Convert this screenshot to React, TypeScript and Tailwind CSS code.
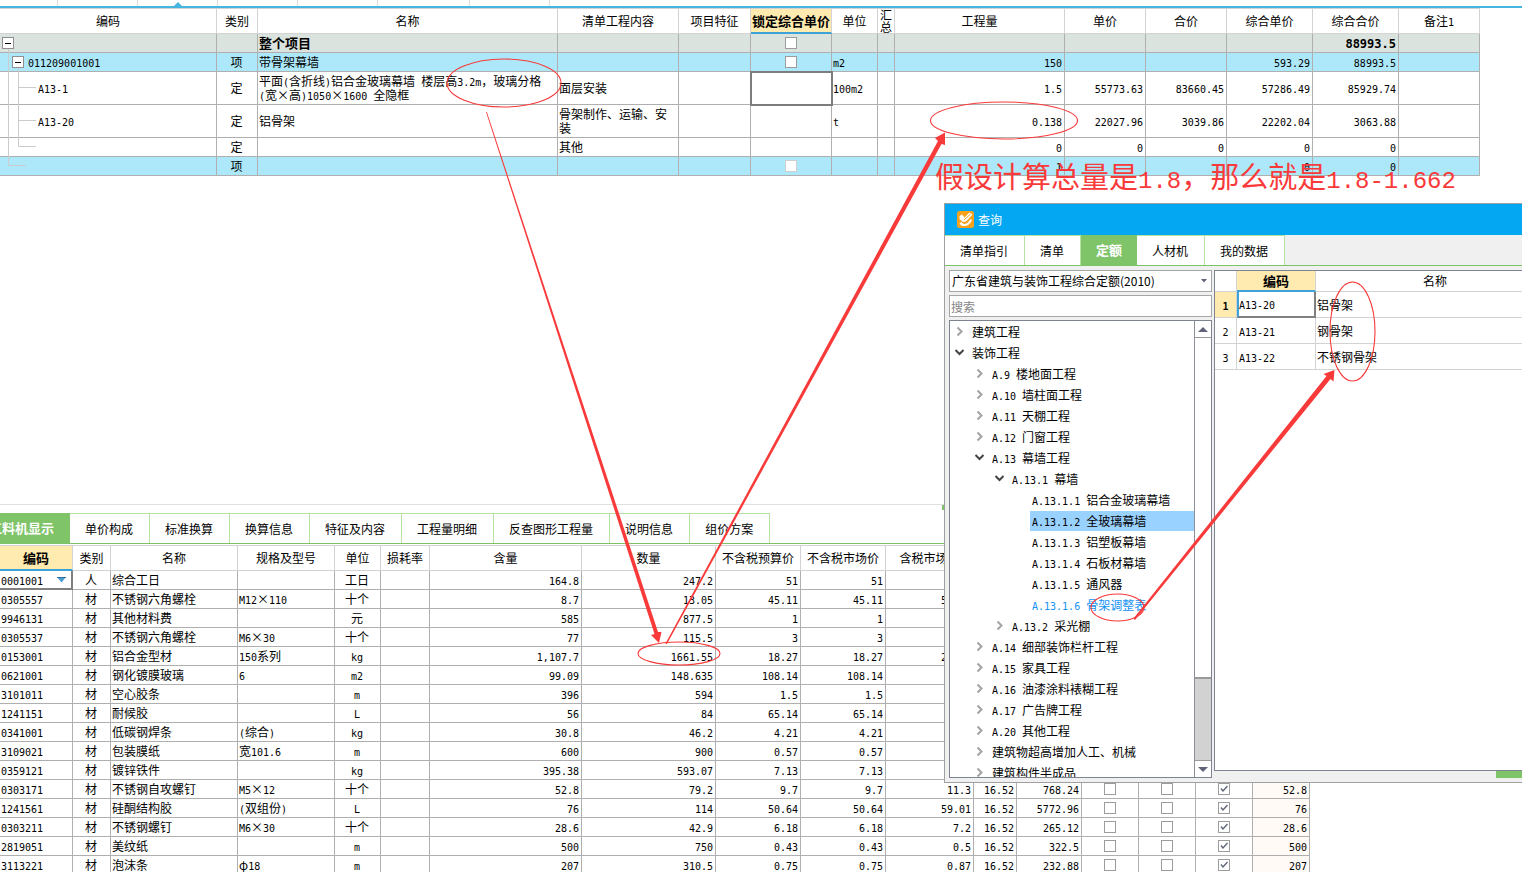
import type { ReactNode } from "react";
import { clsx } from "clsx";

const budgetColumns = [
  { title: "编码", width: "w-[217px]" },
  { title: "类别", width: "w-[41px]" },
  { title: "名称", width: "" },
  { title: "清单工程内容", width: "w-[121px]" },
  { title: "项目特征", width: "w-[72px]" },
  { title: "锁定综合单价", width: "w-[81px]" },
  { title: "单位", width: "w-[46px]" },
  { title: "汇总", width: "w-[17px]" },
  { title: "工程量", width: "w-[170px]" },
  { title: "单价", width: "w-[81px]" },
  { title: "合价", width: "w-[81px]" },
  { title: "综合单价", width: "w-[86px]" },
  { title: "综合合价", width: "w-[86px]" },
  { title: "备注1", width: "w-[81px]" },
];

type BudgetRow = {
  level: number;
  open?: boolean;
  code?: string;
  type?: string;
  name?: string;
  content?: string;
  lock?: "box" | "faint" | "cursor";
  unit?: string;
  values: string[];
  height: string;
  tone: string;
};

const budgetRows: BudgetRow[] = [
  { level: 0, open: true, name: "整个项目", lock: "box", values: ["", "", "", "", "88993.5"], height: "h-[19px]", tone: "bg-[#dae3de] font-bold" },
  { level: 1, open: true, code: "011209001001", type: "项", name: "带骨架幕墙", lock: "box", unit: "m2", values: ["150", "", "", "593.29", "88993.5"], height: "h-[19px]", tone: "bg-[#ade8fa]" },
  { level: 2, code: "A13-1", type: "定", name: "平面(含折线)铝合金玻璃幕墙 楼层高3.2m，玻璃分格\n(宽×高)1050×1600 全隐框", content: "面层安装", lock: "cursor", unit: "100m2", values: ["1.5", "55773.63", "83660.45", "57286.49", "85929.74"], height: "h-[33px]", tone: "bg-white" },
  { level: 2, code: "A13-20", type: "定", name: "铝骨架", content: "骨架制作、运输、安\n装", unit: "t", values: ["0.138", "22027.96", "3039.86", "22202.04", "3063.88"], height: "h-[33px]", tone: "bg-white" },
  { level: 2, type: "定", content: "其他", values: ["0", "0", "0", "0", "0"], height: "h-[19px]", tone: "bg-white" },
  { level: 1, type: "项", lock: "faint", values: ["1", "", "", "0", "0"], height: "h-[19px]", tone: "bg-[#ade8fa]" },
];

const codeIndent = ["pl-px", "pl-[11px]", "pl-[37px]"];

const detailTabs = ["单价构成", "标准换算", "换算信息", "特征及内容", "工程量明细", "反查图形工程量", "说明信息", "组价方案"];

const detailColumns = [
  { title: "编码", width: "w-[73px]" },
  { title: "类别", width: "w-[38px]" },
  { title: "名称", width: "w-[127px]" },
  { title: "规格及型号", width: "w-[97px]" },
  { title: "单位", width: "w-[46px]" },
  { title: "损耗率", width: "w-[49px]" },
  { title: "含量", width: "w-[152px]" },
  { title: "数量", width: "" },
  { title: "不含税预算价", width: "w-[85px]" },
  { title: "不含税市场价", width: "w-[85px]" },
  { title: "含税市场价", width: "w-[88px]" },
  { title: "", width: "w-[43px]" },
  { title: "", width: "w-[65px]" },
  { title: "", width: "w-[57px]" },
  { title: "", width: "w-[57px]" },
  { title: "", width: "w-[57px]" },
  { title: "", width: "w-[57px]" },
];

// code, type, name, spec, unit, content, amount, budget price, market price, taxed price, rate, total, last
const detailRows = [
  ["0001001", "人", "综合工日", "", "工日", "164.8", "247.2", "51", "51"],
  ["0305557", "材", "不锈钢六角螺栓", "M12×110", "十个", "8.7", "13.05", "45.11", "45.11", "52.56"],
  ["9946131", "材", "其他材料费", "", "元", "585", "877.5", "1", "1"],
  ["0305537", "材", "不锈钢六角螺栓", "M6×30", "十个", "77", "115.5", "3", "3"],
  ["0153001", "材", "铝合金型材", "150系列", "kg", "1,107.7", "1661.55", "18.27", "18.27", "21.29"],
  ["0621001", "材", "钢化镀膜玻璃", "6", "m2", "99.09", "148.635", "108.14", "108.14"],
  ["3101011", "材", "空心胶条", "", "m", "396", "594", "1.5", "1.5"],
  ["1241151", "材", "耐候胶", "", "L", "56", "84", "65.14", "65.14"],
  ["0341001", "材", "低碳钢焊条", "(综合)", "kg", "30.8", "46.2", "4.21", "4.21"],
  ["3109021", "材", "包装膜纸", "宽101.6", "m", "600", "900", "0.57", "0.57"],
  ["0359121", "材", "镀锌铁件", "", "kg", "395.38", "593.07", "7.13", "7.13"],
  ["0303171", "材", "不锈钢自攻螺钉", "M5×12", "十个", "52.8", "79.2", "9.7", "9.7", "11.3", "16.52", "768.24", "52.8"],
  ["1241561", "材", "硅酮结构胶", "(双组份)", "L", "76", "114", "50.64", "50.64", "59.01", "16.52", "5772.96", "76"],
  ["0303211", "材", "不锈钢螺钉", "M6×30", "十个", "28.6", "42.9", "6.18", "6.18", "7.2", "16.52", "265.12", "28.6"],
  ["2819051", "材", "美纹纸", "", "m", "500", "750", "0.43", "0.43", "0.5", "16.52", "322.5", "500"],
  ["3113221", "材", "泡沫条", "φ18", "m", "207", "310.5", "0.75", "0.75", "0.87", "16.52", "232.88", "207"],
];

const treeItems: { text: string; level: number; state?: "open" | "closed"; look?: "selected" | "link" }[] = [
  { text: "建筑工程", level: 0, state: "closed" },
  { text: "装饰工程", level: 0, state: "open" },
  { text: "A.9 楼地面工程", level: 1, state: "closed" },
  { text: "A.10 墙柱面工程", level: 1, state: "closed" },
  { text: "A.11 天棚工程", level: 1, state: "closed" },
  { text: "A.12 门窗工程", level: 1, state: "closed" },
  { text: "A.13 幕墙工程", level: 1, state: "open" },
  { text: "A.13.1 幕墙", level: 2, state: "open" },
  { text: "A.13.1.1 铝合金玻璃幕墙", level: 3 },
  { text: "A.13.1.2 全玻璃幕墙", level: 3, look: "selected" },
  { text: "A.13.1.3 铝塑板幕墙", level: 3 },
  { text: "A.13.1.4 石板材幕墙", level: 3 },
  { text: "A.13.1.5 通风器", level: 3 },
  { text: "A.13.1.6 骨架调整表", level: 3, look: "link" },
  { text: "A.13.2 采光棚", level: 2, state: "closed" },
  { text: "A.14 细部装饰栏杆工程", level: 1, state: "closed" },
  { text: "A.15 家具工程", level: 1, state: "closed" },
  { text: "A.16 油漆涂料裱糊工程", level: 1, state: "closed" },
  { text: "A.17 广告牌工程", level: 1, state: "closed" },
  { text: "A.20 其他工程", level: 1, state: "closed" },
  { text: "建筑物超高增加人工、机械", level: 1, state: "closed" },
  { text: "建筑构件半成品", level: 1, state: "closed" },
];

const treeIndent = ["pl-1", "pl-6", "pl-11", "pl-16"];

// Latin runs are set in a half-width monospace so that they line up with the Chinese characters
function Text({ children, bold }: { children?: string; bold?: boolean }) {
  if (!children) return null;
  return (
    <>
      {children.split(/([\x20-\x7e]+)/).map((part, i) =>
        i % 2 ? (
          <span
            key={i}
            className={clsx("font-['DejaVu_Sans_Mono',monospace] whitespace-pre", bold ? "text-[12px]/[10px]" : "text-[10px]/[10px]")}
          >
            {part}
          </span>
        ) : (
          part
        ),
      )}
    </>
  );
}

function Tick({ label, checked, faint }: { label: string; checked?: boolean; faint?: boolean }) {
  return (
    <span className="mx-auto grid size-3">
      <input
        type="checkbox"
        aria-label={label}
        defaultChecked={checked}
        className={clsx("col-start-1 row-start-1 size-3 appearance-none border bg-white", faint ? "border-[#cfcfcf]" : "border-[#9c9c9c]")}
      />
      {checked && (
        <svg className="pointer-events-none col-start-1 row-start-1 size-3" viewBox="0 0 12 12" fill="none">
          <path d="M3 5.5 L5 8 L9.5 3" stroke="#5f6579" strokeWidth="1.4" />
        </svg>
      )}
    </span>
  );
}

function Toggle() {
  return (
    <button type="button" aria-label="-" className="grid size-3 shrink-0 place-items-center border border-[#8f8f8f] bg-white">
      <span className="h-px w-[6px] bg-black" />
    </button>
  );
}

function Cell({ children, className }: { children?: ReactNode; className?: string }) {
  return <td className={clsx("border-r border-b border-[#afafaf] py-0 pr-0.5 pl-px", className)}>{children}</td>;
}

function BudgetTable() {
  return (
    <div className="relative pr-[42px]">
      <table className="w-full table-fixed border-separate border-spacing-0 border-t border-[#d3d3d3]">
        <colgroup>
          {budgetColumns.map((c) => (
            <col key={c.title} className={c.width} />
          ))}
        </colgroup>
        <thead>
          <tr>
            {budgetColumns.map((c) => (
              <th
                key={c.title}
                className={clsx(
                  "h-[25px] border-r border-[#d3d3d3] p-0",
                  c.title === "锁定综合单价"
                    ? "border-b-2 border-b-[#3fa2d6] bg-[#ffebb0] text-[13px] font-bold whitespace-nowrap"
                    : "border-b font-normal",
                )}
              >
                {c.title === "汇总" ? (
                  <div className="mx-auto h-6 w-3 leading-3 break-all">{c.title}</div>
                ) : (
                  <Text>{c.title}</Text>
                )}
              </th>
            ))}
          </tr>
        </thead>
        <tbody>
          {budgetRows.map((row, i) => (
            <tr key={i} className={clsx(row.tone, row.height)}>
              <Cell>
                <div className={clsx("flex items-center gap-1", codeIndent[row.level])}>
                  {row.open && <Toggle />}
                  <span>
                    <Text>{row.code}</Text>
                  </span>
                </div>
              </Cell>
              <Cell className="text-center">{row.type}</Cell>
              <Cell className={clsx("leading-[14px] whitespace-pre-line", i === 0 && "text-[13px]")}>
                <Text>{row.name}</Text>
              </Cell>
              <Cell className="leading-[14px] whitespace-pre-line">{row.content}</Cell>
              <Cell />
              <Cell className={clsx(row.lock === "cursor" && "outline-2 -outline-offset-1 outline-[#7d7d7d]")}>
                {(row.lock === "box" || row.lock === "faint") && <Tick label="锁定综合单价" faint={row.lock === "faint"} />}
              </Cell>
              <Cell>
                <Text>{row.unit}</Text>
              </Cell>
              <Cell />
              {row.values.map((value, n) => (
                <Cell key={n} className="text-right">
                  <Text bold={i === 0}>{value}</Text>
                </Cell>
              ))}
              <Cell />
            </tr>
          ))}
        </tbody>
      </table>
      {/* Tree branches of the code column */}
      <svg className="pointer-events-none absolute top-0 left-0" width="40" height="168" fill="none" stroke="#cbcbcb">
        <path d="M8.5 41V157.5H26M18.5 60V138.5H36M18.5 79.5H36M18.5 112.5H36" />
        <path d="M12.500 48.500H23.500V59.500H12.500Z" fill="white" stroke="#8f8f8f" />
        <path d="M15 54.500H21" stroke="black" />
      </svg>
    </div>
  );
}

function DetailPanel() {
  return (
    <section className="overflow-hidden border-t border-[#e0e0e0]">
      <div className="h-2 pl-[942px]">
        <div className="h-[5px] w-[26px] bg-[#7fc469]" />
      </div>
      <div className="flex border-b border-[#7cc267]">
        <button type="button" className="-ml-[27px] h-[30px] bg-[#7fc469] px-4 text-[13px] font-bold whitespace-nowrap text-white">
          工料机显示
        </button>
        {detailTabs.map((tab) => (
          <button key={tab} type="button" className="h-[30px] border-t border-r border-[#b4e3a1] pt-px pr-4 pl-[15px] whitespace-nowrap">
            {tab}
          </button>
        ))}
      </div>
      <div className="pt-px pr-[212px]">
        <table className="w-full table-fixed border-separate border-spacing-0 border-t border-[#d3d3d3]">
          <colgroup>
            {detailColumns.map((c, i) => (
              <col key={i} className={c.width} />
            ))}
          </colgroup>
          <thead>
            <tr>
              {detailColumns.map((c, i) => (
                <th
                  key={i}
                  className={clsx(
                    "h-[25px] border-r border-[#d3d3d3] p-0 whitespace-nowrap",
                    i === 0 ? "border-b-2 border-b-[#3fa2d6] bg-[#ffebb0] text-[13px] font-bold" : "border-b font-normal",
                  )}
                >
                  {c.title}
                </th>
              ))}
            </tr>
          </thead>
          <tbody>
            {detailRows.map(([code, type, name, spec, unit, ...values], i) => (
              <tr key={code} className="h-[19px]">
                {i === 0 ? (
                  <td className="border-r-2 border-b-2 border-[#808080] px-px py-0">
                    <div className="flex items-center justify-between pr-1">
                      <span>
                        <Text>{code}</Text>
                      </span>
                      <button type="button" aria-label={code}>
                        <svg width="9" height="6" viewBox="0 0 9 6">
                          <path d="M0 0H9L4.5 5.5Z" fill="#4b9cd0" />
                          <path d="M0 0H9V1H0Z" fill="#2e6f9e" />
                        </svg>
                      </button>
                    </div>
                  </td>
                ) : (
                  <Cell>
                    <Text>{code}</Text>
                  </Cell>
                )}
                <Cell className="text-center">{type}</Cell>
                <Cell className="whitespace-nowrap">{name}</Cell>
                <Cell>
                  <Text>{spec}</Text>
                </Cell>
                <Cell className="text-center">
                  <Text>{unit}</Text>
                </Cell>
                <Cell />
                {[0, 1, 2, 3, 4, 5, 6].map((n) => (
                  <Cell key={n} className="text-right">
                    <Text>{values[n]}</Text>
                  </Cell>
                ))}
                <Cell>
                  <Tick label={`${name} 1`} />
                </Cell>
                <Cell>
                  <Tick label={`${name} 2`} />
                </Cell>
                <Cell>
                  <Tick label={`${name} 3`} checked />
                </Cell>
                <Cell className="bg-[#fffaf6] text-right">
                  <Text>{values[7]}</Text>
                </Cell>
              </tr>
            ))}
          </tbody>
        </table>
      </div>
    </section>
  );
}

function Chevron({ open }: { open: boolean }) {
  return (
    <svg className="shrink-0" width="11" height="11" viewBox="0 0 11 11" fill="none" strokeWidth="2">
      {open ? <path d="M1.5 3 L5.5 7 L9.5 3" stroke="#444444" /> : <path d="M3.5 1.5 L7.5 5.5 L3.5 9.5" stroke="#a3a3a3" />}
    </svg>
  );
}

function QuotaTree() {
  return (
    <div className="flex h-[458px] border border-[#7d8390] bg-white">
      <ul className="min-w-0 flex-1 overflow-hidden">
        {treeItems.map((item) => (
          <li key={item.text} className={clsx("flex h-[21px] items-center", treeIndent[item.level])}>
            <span className="flex w-4 shrink-0">{item.state && <Chevron open={item.state === "open"} />}</span>
            <span
              className={clsx(
                "flex-1 pl-0.5 leading-5 whitespace-nowrap",
                item.look === "selected" && "bg-[#99d1ff]",
                item.look === "link" && "text-[#1492f5]",
              )}
            >
              <Text>{item.text}</Text>
            </span>
          </li>
        ))}
      </ul>
      <div className="flex w-[17px] flex-col border-l border-[#8b8f98] bg-[#d2d2d2]">
        <button type="button" aria-label="▲" className="grid h-[17px] place-items-center border-b border-[#9a9a9a] bg-white">
          <svg width="10" height="5">
            <path d="M0 5L5 0L10 5Z" fill="#606478" />
          </svg>
        </button>
        <div className="h-[341px] border-b-2 border-[#9a9a9a] bg-white" />
        <div className="flex-1" />
        <button type="button" aria-label="▼" className="grid h-[17px] place-items-center border-t border-[#9a9a9a] bg-white">
          <svg width="10" height="5">
            <path d="M0 0L5 5L10 0Z" fill="#606478" />
          </svg>
        </button>
      </div>
    </div>
  );
}

const quotas = [
  { code: "A13-20", name: "铝骨架" },
  { code: "A13-21", name: "钢骨架" },
  { code: "A13-22", name: "不锈钢骨架" },
];

function QueryWindow() {
  const tab = "h-[30px] border-t border-r border-[#b4e3a1] bg-white pt-px pl-[15px] pr-4";
  return (
    <section className="absolute top-[203px] right-0 left-[944px] border-t border-b border-l border-[#a0a0a0] bg-[#f0f0f0]">
      <header className="flex h-[31px] items-center gap-1 bg-[#03a7f2] pl-3 text-white">
        <svg width="17" height="17" viewBox="0 0 17 17" fill="none">
          <rect width="17" height="17" rx="2.5" fill="#f9a11b" />
          <path d="M2.500 5L5 3.500L7.500 6.500L12.500 1.500L15.500 3.500L9 10.500L6 11L2.500 8Z" fill="white" />
          <path d="M3.500 11.500C5 15 11.500 15.500 14 8.500" stroke="white" strokeWidth="2.200" />
          <path d="M7 9L13.500 3" stroke="#f9a11b" />
        </svg>
        <h2>查询</h2>
      </header>
      <nav className="flex border-b border-[#7cc267]">
        <button type="button" className={tab}>清单指引</button>
        <button type="button" className={tab}>清单</button>
        <button type="button" className="h-[30px] bg-[#7fc469] px-[15px] text-[13px] font-bold text-white">定额</button>
        <button type="button" className={tab}>人材机</button>
        <button type="button" className={tab}>我的数据</button>
      </nav>
      <div className="flex gap-0.5 pt-1 pb-1 pl-1">
        <div className="flex w-[263px] shrink-0 flex-col gap-[3px]">
          <div className="grid">
            <select
              aria-label="定额"
              className="col-start-1 row-start-1 h-[22px] w-full appearance-none border border-[#a6a6a6] bg-white pl-0.5"
            >
              <option>广东省建筑与装饰工程综合定额(2010)</option>
            </select>
            <svg className="pointer-events-none col-start-1 row-start-1 mr-[5px] self-center justify-self-end" width="6" height="4">
              <path d="M0 0H6L3 3.5Z" fill="#606478" />
            </svg>
          </div>
          <input
            type="text"
            aria-label="搜索"
            placeholder="搜索"
            className="h-[22px] border border-[#a6a6a6] bg-white px-px placeholder:text-[#858585]"
          />
          <QuotaTree />
        </div>
        <div className="min-w-0 flex-1">
          <div className="h-[501px] border-t border-b border-l border-[#7d8390] bg-white">
            <table className="w-full table-fixed border-separate border-spacing-0">
              <colgroup>
                <col className="w-[22px]" />
                <col className="w-[79px]" />
                <col />
              </colgroup>
              <thead>
                <tr>
                  <th className="h-[21px] border-r border-b border-[#d3d3d3] p-0" />
                  <th className="border-r border-b-2 border-r-[#d3d3d3] border-b-[#3fa2d6] bg-[#ffebb0] p-0 text-[13px]">编码</th>
                  <th className="border-b border-[#d3d3d3] p-0 pl-8 font-normal">名称</th>
                </tr>
              </thead>
              <tbody>
                {quotas.map((quota, i) => (
                  <tr key={quota.code} className="h-[26px]">
                    <td className={clsx("border-r border-b border-[#d3d3d3] p-0 text-center", i === 0 && "bg-[#ffebb0] font-bold")}>
                      <Text>{String(i + 1)}</Text>
                    </td>
                    <td
                      className={clsx(
                        "py-0",
                        i === 0
                          ? "border-r-2 border-b-2 border-l-2 border-r-[#808080] border-b-[#808080] border-l-[#3fa2d6] pl-0"
                          : "border-r border-b border-[#d3d3d3] pl-0.5",
                      )}
                    >
                      <Text>{quota.code}</Text>
                    </td>
                    <td className="border-b border-[#d3d3d3] px-px py-0">{quota.name}</td>
                  </tr>
                ))}
              </tbody>
            </table>
          </div>
          <div className="ml-auto h-[7px] w-[26px] bg-[#7fc469]" />
        </div>
      </div>
    </section>
  );
}

function Annotations() {
  return (
    <>
      <svg className="pointer-events-none absolute inset-0 h-full w-full" fill="none" stroke="#f93a3a" strokeWidth="1.1">
        <ellipse cx="504" cy="83" rx="57" ry="24" />
        <ellipse cx="1004" cy="120.500" rx="73.500" ry="18.500" />
        <ellipse cx="679" cy="653.500" rx="41" ry="11.500" />
        <ellipse cx="1352.500" cy="331.500" rx="22.500" ry="49.500" />
        <ellipse cx="1117.500" cy="607.500" rx="26.500" ry="13.500" />
        <g fill="#f93a3a" stroke="none">
          <path d="M486 112L486.800 111.800L658 632L661.500 632L659 643L651 635L654.500 634Z" />
          <path d="M665.500 643.500L666.800 644.200L941.500 144L945 145L945 132.500L935 138L938 141Z" />
          <path d="M1133.500 618.500L1135 620L1330.500 379L1333.500 381.500L1334.500 370L1323.500 374L1326.500 376Z" />
        </g>
      </svg>
      <p className="pointer-events-none absolute top-[157px] left-[935px] text-[29px] leading-9 font-normal whitespace-nowrap text-[#f93a3a]">
        假设计算总量是
        <span className="font-['Liberation_Mono',monospace] text-[24px]">1.8</span>
        ，那么就是
        <span className="font-['Liberation_Mono',monospace] text-[24px]">1.8-1.662</span>
      </p>
    </>
  );
}

export default function App() {
  return (
    <main className="relative flex h-screen flex-col overflow-hidden bg-white font-['Noto_Sans_CJK_SC',sans-serif] text-[12px] leading-4 text-black">
      <div className="h-[504px] shrink-0">
        {/* Lower edge of the tab strip, the marker points at the open tab */}
        <div className="flex h-2 border-b-2 border-[#45b4df]">
          <div className="w-[58px] border-r border-[#dddddd]" />
          <div className="w-[80px] border-r border-[#dddddd]" />
          <div className="flex w-[80px] items-end justify-center border-r border-[#dddddd]">
            <svg width="8" height="4">
              <path d="M0 4L4 0L8 4Z" fill="#45b4df" />
            </svg>
          </div>
          <div className="w-[80px] border-r border-[#dddddd]" />
          <div className="w-[80px] border-r border-[#dddddd]" />
          <div className="w-[92px] border-r border-[#dddddd]" />
          <div className="w-[80px] border-r border-[#dddddd]" />
        </div>
        <BudgetTable />
      </div>
      <DetailPanel />
      <QueryWindow />
      <Annotations />
    </main>
  );
}
